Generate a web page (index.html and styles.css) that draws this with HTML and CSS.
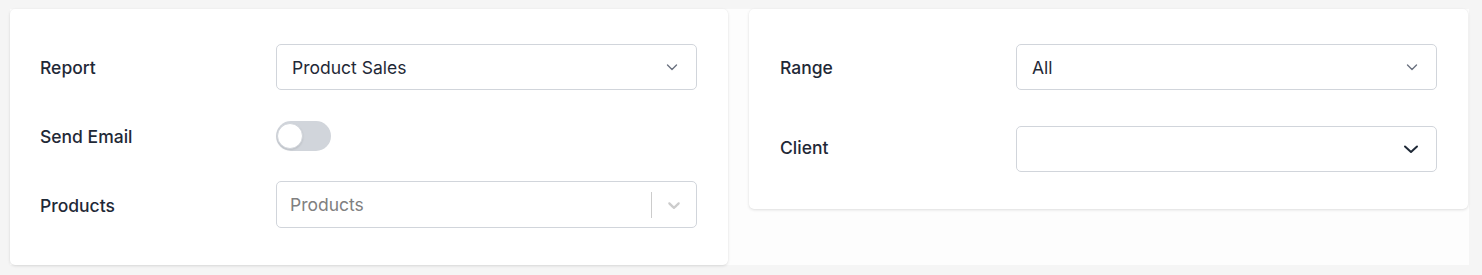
FILE: index.html
```html
<!DOCTYPE html>
<html>
<head>
<meta charset="utf-8">
<link rel="stylesheet" href="styles.css">
</head>
<body>
<div class="wrap">
  <div class="card card-left">
    <div class="row row-report">
      <label class="label">Report</label>
      <div class="select">
        <span class="value">Product Sales</span>
        <svg class="chev" width="14" height="14" viewBox="0 0 14 14"><path d="M2.5 5 L7 9.5 L11.5 5" fill="none" stroke="#6b7280" stroke-width="1.4" stroke-linecap="round" stroke-linejoin="round"/></svg>
      </div>
    </div>
    <div class="row row-toggle">
      <label class="label">Send Email</label>
      <div class="toggle"><span class="knob"></span></div>
    </div>
    <div class="row row-products">
      <label class="label">Products</label>
      <div class="select rselect">
        <span class="placeholder">Products</span>
        <span class="sep"></span>
        <svg class="rchev" width="20" height="20" viewBox="0 0 20 20"><path d="M4.516 7.548c0.436-0.446 1.043-0.481 1.576 0l3.908 3.747 3.908-3.747c0.533-0.481 1.141-0.446 1.574 0 0.436 0.445 0.408 1.197 0 1.615-0.406 0.418-4.695 4.502-4.695 4.502-0.217 0.223-0.502 0.335-0.787 0.335s-0.57-0.112-0.789-0.335c0 0-4.287-4.084-4.695-4.502s-0.436-1.170 0-1.615z" fill="#cccccc"/></svg>
      </div>
    </div>
  </div>
  <div class="card card-right">
    <div class="row row-range">
      <label class="label">Range</label>
      <div class="select">
        <span class="value">All</span>
        <svg class="chev" width="14" height="14" viewBox="0 0 14 14"><path d="M2.5 5 L7 9.5 L11.5 5" fill="none" stroke="#6b7280" stroke-width="1.4" stroke-linecap="round" stroke-linejoin="round"/></svg>
      </div>
    </div>
    <div class="row row-client">
      <label class="label">Client</label>
      <div class="select">
        <span class="value"></span>
        <svg class="chev2" width="18" height="18" viewBox="0 0 18 18"><path d="M3 6.5 L9 12 L15 6.5" fill="none" stroke="#1f2937" stroke-width="2" stroke-linecap="round" stroke-linejoin="round"/></svg>
      </div>
    </div>
  </div>
</div>
</body>
</html>
```
FILE: styles.css
```css
* { box-sizing: border-box; }
html, body { margin: 0; padding: 0; }
body {
  background: #f5f5f5;
  font-family: Inter, "Noto Sans", sans-serif;
  font-size: 17.5px;
  color: #1f2937;
  height: 275px;
  overflow: hidden;
}
.wrap {
  margin: 9px 13px 0 10px;
  height: 256px;
  background: #fdfdfd;
  display: grid;
  grid-template-columns: 718px 719px;
  column-gap: 21px;
  align-items: start;
}
.card {
  background: #ffffff;
  border-radius: 5px;
  box-shadow: 0 1px 3px rgba(0,0,0,0.12), 0 0 1px rgba(0,0,0,0.05);
  padding: 35px 31px 37px 30px;
  display: flex;
  flex-direction: column;
}
.card-left { height: 256px; }
.card-right { padding-left: 31px; padding-right: 31px; height: 200px; }
.row {
  display: grid;
  grid-template-columns: 236px 1fr;
  align-items: center;
}
.label {
  font-weight: 500;
  color: #1f2937;
  line-height: 1;
  padding-top: 2px;
}
.row-client .label { padding-top: 0; margin-top: -2px; }
.row-toggle { margin-top: 31px; }
.row-products { margin-top: 30px; }
.row-client { margin-top: 36px; }
.select {
  height: 46px;
  border: 1px solid #d1d5db;
  border-radius: 5px;
  background: #fff;
  display: flex;
  align-items: center;
  padding: 0 17px 0 15px;
}
.value { flex: 1; color: #1f2937; line-height: 1; padding-top: 2px; }
.chev { display: block; }
.chev2 { display: block; margin-right: -1px; }
.rselect { height: 47px; padding: 0 12px 0 13px; }
.placeholder { flex: 1; color: #808080; }
.sep {
  width: 1px;
  height: 26px;
  background: #cccccc;
  margin-right: 12px;
}
.rchev { display: block; }
.toggle {
  width: 55px;
  height: 30px;
  border-radius: 15px;
  background: #d1d5db;
  position: relative;
}
.knob {
  position: absolute;
  left: 1px;
  top: 2px;
  width: 26px;
  height: 26px;
  border-radius: 50%;
  background: #fff;
  border: 1px solid #d1d5db;
  box-shadow: 0 1px 2px rgba(0,0,0,0.1);
}
```
